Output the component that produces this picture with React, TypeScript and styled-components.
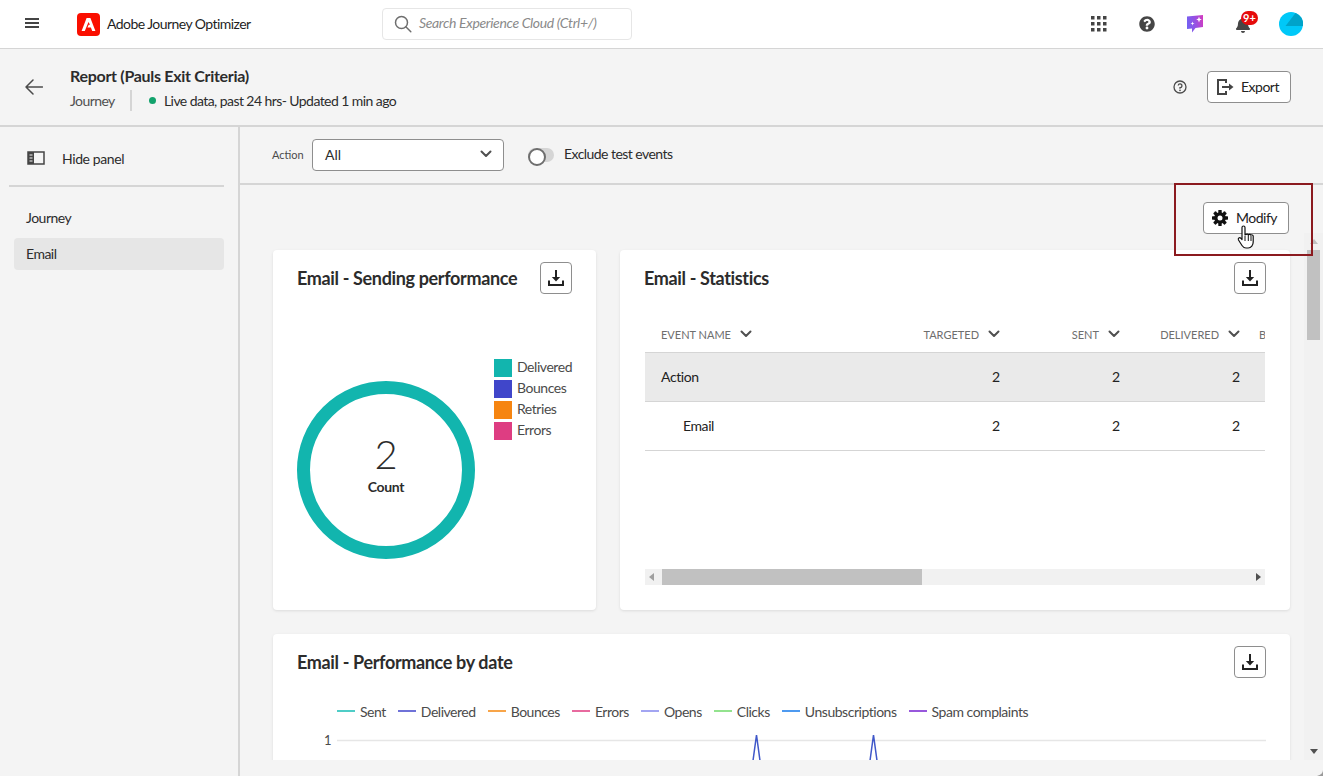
import React from "react";
import styled, { createGlobalStyle } from "styled-components";
import { FaBell, FaQuestionCircle } from "react-icons/fa";

const FONT = `Lato, "Open Sans", "Liberation Sans", sans-serif`;

const Global = createGlobalStyle`
  html, body { margin: 0; padding: 0; height: 100%; overflow: hidden; background: #f4f4f4; }
  body { font-family: ${FONT}; color: #2c2c2c; }
  * { box-sizing: border-box; }
`;

const Page = styled.div`
  position: relative; width: 1323px; height: 776px; display: flex; flex-direction: column; overflow: hidden;
  background: #f4f4f4; font-size: 14px;
`;

/* ---------- top bar ---------- */
const TopBar = styled.header`
  height: 49px; flex: none; background: #fff; border-bottom: 1px solid #d5d5d5; display: flex; align-items: center;
  padding-left: 25px;
`;
const Burger = styled.svg`width: 14px; height: 10px; flex: none; margin-right: 38px; margin-top: -2px;`;
const Logo = styled.svg`width: 23px; height: 23px; flex: none; margin-right: 7px;`;
const Brand = styled.span`width: 275px; flex: none; font-size: 14px; color: #1f1f1f; letter-spacing: -0.55px; padding-bottom: 1px;`;
const Search = styled.div`
  width: 250px; height: 32px; flex: none; border: 1px solid #e6e6e6; border-radius: 4px; display: flex; align-items: center;
  padding-left: 11px; gap: 7px; font-style: italic; font-size: 14px; color: #8a8a8a; letter-spacing: -0.35px;
`;
const SearchText = styled.span`padding-bottom: 3px;`;
const TopIcons = styled.div`
  margin-left: auto; display: flex; align-items: center; gap: 31px; padding-right: 20px; height: 48px; flex: none;
`;
const BellWrap = styled.div`position: relative; width: 16px; height: 18px; display: flex; color: #464646; margin-top: 3px;`;
const Badge = styled.span`
  position: absolute; left: 6px; top: -6px; height: 14px; min-width: 17px; padding: 0 2px; border-radius: 7px; background: #e50b0b; color: #fff;
  font: 700 11px/14px ${FONT}; text-align: center;
`;
const HelpDark = styled.span`display: flex; color: #464646; font-size: 16px; margin-left: 1px;`;
const Avatar = styled.svg`width: 24px; height: 24px; flex: none; margin-left: -3px;`;

/* ---------- page header ---------- */
const Header = styled.section`
  height: 78px; flex: none; border-bottom: 2px solid #d5d5d5; display: flex; align-items: center; padding: 0 32px 0 25px;
`;
const BackIcon = styled.svg`width: 18px; height: 16px; flex: none; margin-right: 27px;`;
const HeaderText = styled.div`display: flex; flex-direction: column; gap: 4px; margin-top: 2px;`;
const Title = styled.h1`margin: 0; font-size: 16px; line-height: 20px; font-weight: 700; color: #2c2c2c; letter-spacing: -0.3px;`;
const Meta = styled.div`display: flex; align-items: center; font-size: 14px; line-height: 21px; height: 21px; letter-spacing: -0.57px;`;
const MetaType = styled.span`color: #505050; width: 62px; height: 21px; border-right: 2px solid #d5d5d5;`;
const Dot = styled.span`width: 7px; height: 7px; border-radius: 50%; background: #12a26c; margin: 0 8px 0 17px;`;
const HeaderActions = styled.div`margin-left: auto; display: flex; align-items: center; gap: 20px;`;
const OutlineButton = styled.button`
  height: 32px; display: inline-flex; align-items: center; background: #fff; border: 1px solid #8e8e8e; border-radius: 4px;
  font: 400 14px ${FONT}; color: #222; letter-spacing: -0.5px; padding: 0; cursor: pointer;
`;
const ButtonLabel = styled.span`padding-bottom: 2px;`;
const ExportButton = styled(OutlineButton)`width: 84px; padding-left: 8px; gap: 7px;`;
const ModifyButton = styled(OutlineButton)`width: 86px; padding-left: 8px; gap: 8px;`;

/* ---------- body ---------- */
const Body = styled.div`flex: 1; min-height: 0; display: flex;`;
const Side = styled.aside`width: 240px; flex: none; border-right: 2px solid #d5d5d5; padding: 0 14px 0 9px;`;
const HidePanel = styled.div`
  height: 60px; display: flex; align-items: center; gap: 17px; padding: 4px 0 0 18px; border-bottom: 2px solid #d5d5d5; font-size: 14px;
  color: #2c2c2c; letter-spacing: -0.4px;
`;
const NavList = styled.nav`display: flex; flex-direction: column; gap: 4px; padding: 15px 0 0 5px;`;
const NavItem = styled.div<{ $active?: boolean }>`
  height: 32px; line-height: 32px; padding-left: 12px; border-radius: 4px; font-size: 14px; letter-spacing: -0.5px;
  background: ${(p) => (p.$active ? "#e6e6e6" : "transparent")};
`;

const Main = styled.main`flex: 1; min-width: 0; display: flex; flex-direction: column;`;
const FilterBar = styled.div`
  height: 58px; flex: none; border-bottom: 2px solid #d5d5d5; display: flex; align-items: center; padding: 0 0 0 32px;
`;
const FilterLabel = styled.span`font-size: 11px; color: #4b4b4b; width: 40px; flex: none; padding-bottom: 2px;`;
const Select = styled.div`
  width: 192px; height: 32px; background: #fff; border: 1px solid #8e8e8e; border-radius: 4px; display: flex; align-items: center;
  justify-content: space-between; padding: 0 11px 2px 12px; font-size: 14px; margin-right: 24px;
`;
const Toggle = styled.span`
  position: relative; width: 26px; height: 14px; border-radius: 7px; background: #d5d5d5; flex: none; margin-right: 10px;
  &::before { content: ""; position: absolute; left: 0; top: 0; width: 14px; height: 14px; border-radius: 50%; background: #fff; border: 2px solid #6e6e6e; }
`;
const ToggleLabel = styled.span`font-size: 14px; letter-spacing: -0.55px; color: #2c2c2c; margin-top: -4px;`;

const ModifyRow = styled.div`height: 48px; flex: none; display: flex; justify-content: flex-end; align-items: flex-start; padding: 17px 34px 0 0;`;
const ScrollZone = styled.div`flex: 1; min-height: 0; display: flex; margin-bottom: 16px;`;
const Scroller = styled.div`flex: 1; min-width: 0; overflow: hidden; padding: 17px 14px 0 33px; display: flex; flex-direction: column; gap: 24px;`;
const Track = styled.div`
  width: 19px; flex: none; background: #f1f1f1; position: relative; display: flex; flex-direction: column; align-items: center;
`;
const Thumb = styled.div`width: 13px; height: 90px; background: #c1c1c1; margin-top: 6px;`;
const ArrowUp = styled.span`
  margin-top: 6px; width: 0; height: 0; border-left: 4px solid transparent; border-right: 4px solid transparent; border-bottom: 5px solid #c0c0c0;
`;
const ArrowDown = styled.span`
  position: absolute; bottom: 6px; width: 0; height: 0; border-left: 4px solid transparent; border-right: 4px solid transparent; border-top: 5px solid #505050;
`;

const Row = styled.div`display: flex; gap: 24px; flex: none;`;
const Card = styled.section<{ $w?: number; $h?: number }>`
  ${(p) => (p.$w ? `width: ${p.$w}px;` : "width: 100%;")}
  ${(p) => (p.$h ? `height: ${p.$h}px;` : "")}
  flex: none; background: #fff; border-radius: 4px; box-shadow: 0 1px 3px rgba(0,0,0,0.1); padding: 12px 24px 0;
  display: flex; flex-direction: column;
`;
const CardHead = styled.div`display: flex; align-items: center; justify-content: space-between; height: 32px; flex: none;`;
const CardTitle = styled.h2`margin: 0; font-size: 18px; font-weight: 700; color: #2c2c2c; letter-spacing: -0.35px;`;
const IconButton = styled(OutlineButton)`width: 32px; justify-content: center;`;

/* donut */
const DonutArea = styled.div`display: flex; padding-top: 65px; height: 300px;`;
const DonutWrap = styled.div`position: relative; width: 178px; height: 178px; margin-top: 22px; flex: none;`;
const DonutCenter = styled.div`
  position: absolute; inset: 0; display: flex; flex-direction: column; align-items: center; padding-top: 49px;
`;
const DonutValue = styled.span`font-size: 40px; line-height: 48px; font-weight: 300; color: #2c2c2c;`;
const DonutLabel = styled.span`font-size: 14px; line-height: 18px; font-weight: 700; color: #2c2c2c; letter-spacing: -0.3px;`;
const Legend = styled.ul`list-style: none; margin: 0 0 0 19px; padding: 0; display: flex; flex-direction: column; gap: 3px;`;
const LegendItem = styled.li`display: flex; align-items: center; gap: 5px; height: 18px; font-size: 14px; color: #4b4b4b; letter-spacing: -0.45px;`;
const LegendName = styled.span`padding-bottom: 4px;`;
const Swatch = styled.span<{ $c: string }>`width: 18px; height: 18px; background: ${(p) => p.$c}; flex: none;`;

/* table */
const TableClip = styled.div`width: 620px; margin: 23px 0 0 1px; overflow: hidden; height: 252px; flex: none;`;
const TableGrid = styled.div`width: 800px;`;
const TableRow = styled.div<{ $head?: boolean; $shade?: boolean }>`
  display: grid; grid-template-columns: 235px 132px 120px 120px 193px; align-items: center;
  height: ${(p) => (p.$head ? 36 : 49)}px;
  border-bottom: 1px solid #d5d5d5;
  background: ${(p) => (p.$shade ? "#eaeaea" : "transparent")};
`;
const HeadCell = styled.div<{ $left?: boolean }>`
  display: flex; align-items: center; gap: 9px; font-size: 11px; color: #6e6e6e;
  justify-content: ${(p) => (p.$left ? "flex-start" : "flex-end")};
  padding: ${(p) => (p.$left ? "0 0 1px 16px" : "0 12px 1px 0")};
`;
const NameCell = styled.div<{ $indent?: boolean }>`
  font-size: 14px; letter-spacing: -0.4px; color: #222; padding: 0 0 2px ${(p) => (p.$indent ? 38 : 16)}px;
`;
const NumCell = styled.div`font-size: 14px; color: #222; text-align: right; padding: 0 12px 2px 0;`;
const LastHead = styled.div`font-size: 11px; color: #6e6e6e; padding: 0 0 1px 7px;`;
const Chevron = styled.svg`width: 12px; height: 8px; flex: none;`;
const HScroll = styled.div`
  width: 620px; margin-left: 1px; height: 16px; background: #f1f1f1; flex: none; display: flex; align-items: center; justify-content: space-between; padding: 0 4px;
  position: relative;
`;
const HThumb = styled.div`position: absolute; left: 17px; top: 0; width: 260px; height: 16px; background: #c1c1c1;`;
const ArrowLeft = styled.span`width: 0; height: 0; border-top: 4px solid transparent; border-bottom: 4px solid transparent; border-right: 5px solid #a0a0a0;`;
const ArrowRight = styled.span`width: 0; height: 0; border-top: 4px solid transparent; border-bottom: 4px solid transparent; border-left: 5px solid #505050;`;

/* line chart */
const LineLegend = styled.div`display: flex; align-items: center; gap: 12px; margin: 23px 0 0 40px; height: 20px; font-size: 14px; color: #4b4b4b; letter-spacing: -0.47px;`;
const LineItem = styled.span`display: flex; align-items: center; gap: 5px;`;
const LineMark = styled.span<{ $c: string }>`width: 18px; height: 2px; background: ${(p) => p.$c}; flex: none;`;
const ChartRow = styled.div`display: flex; margin-top: 9px; height: 60px; position: relative;`;
const AxisLabel = styled.span`width: 40px; padding-left: 27px; font-size: 13px; line-height: 18px; color: #4b4b4b; flex: none; margin-top: 1px;`;
const Chart = styled.svg`width: 929px; height: 60px; flex: none;`;

/* overlays */
const Highlight = styled.div`
  position: absolute; left: 1174px; top: 183px; width: 139px; height: 73px; border: 2px solid #8b1a1f; pointer-events: none;
`;
const Cursor = styled.svg`position: absolute; left: 1237px; top: 225px; width: 20px; height: 24px; pointer-events: none;`;
const Corner = styled.svg`position: absolute; right: 0; bottom: 0; width: 10px; height: 10px;`;

const Down = () => (
  <Chevron viewBox="0 0 12 8"><path d="M1.500 1.500 6 6l4.500-4.500" fill="none" stroke="#505050" strokeWidth="2" strokeLinecap="round" strokeLinejoin="round" /></Chevron>
);
const DownloadIcon = () => (
  <svg width="18" height="18" viewBox="0 0 18 18">
    <path d="M9 1v8M2 11.500V16h14v-4.500" fill="none" stroke="#222" strokeWidth="2" />
    <path d="M4.800 8h8.400L9 12.500z" fill="#222" />
  </svg>
);
const Gear = () => (
  <svg width="16" height="16" viewBox="0 0 16 16">
    <g fill="#111">
      {[0, 45, 90, 135].map((a) => <rect key={a} x="6.300" y="0" width="3.400" height="16" rx="0.600" transform={`rotate(${a} 8 8)`} />)}
    </g>
    <circle cx="8" cy="8" r="5.800" fill="#111" />
    <circle cx="8" cy="8" r="2.500" fill="#fff" />
  </svg>
);

const legend: [string, string][] = [["Delivered", "#12b5ae"], ["Bounces", "#4046ca"], ["Retries", "#f68511"], ["Errors", "#de3d82"]];
const lines: [string, string][] = [
  ["Sent", "#4fcdc7"], ["Delivered", "#6f72d8"], ["Bounces", "#f8a549"], ["Errors", "#e86a9f"],
  ["Opens", "#a3a5f2"], ["Clicks", "#93e38e"], ["Unsubscriptions", "#4e9af0"], ["Spam complaints", "#9858dc"],
];

export default function App() {
  return (
    <Page>
      <Global />
      <TopBar>
        <Burger viewBox="0 0 14 10"><path d="M0 1h14M0 5h14M0 9h14" stroke="#444" strokeWidth="2" /></Burger>
        <Logo viewBox="0 0 23 23">
          <rect width="23" height="23" rx="4" fill="#fa0f00" />
          <path d="M9.600 5h3.800l5 13h-3.200l-1.300-3.500h-3.500l1.300-2.700h1.300L11.500 9 7.800 18H4.600z" fill="#fff" />
        </Logo>
        <Brand>Adobe Journey Optimizer</Brand>
        <Search>
          <svg width="18" height="18" viewBox="0 0 18 18"><circle cx="7.500" cy="7.500" r="6" fill="none" stroke="#6e6e6e" strokeWidth="1.500" /><path d="m11.800 11.800 5 5" stroke="#6e6e6e" strokeWidth="1.500" strokeLinecap="round" /></svg>
          <SearchText>Search Experience Cloud (Ctrl+/)</SearchText>
        </Search>
        <TopIcons>
          <svg width="16" height="16" viewBox="0 0 16 16" fill="#444">
            {[0, 6, 12].flatMap((y) => [0, 6, 12].map((x) => <rect key={`${x}-${y}`} x={x} y={y} width="3.500" height="3.500" />))}
          </svg>
          <HelpDark><FaQuestionCircle /></HelpDark>
          <svg width="18" height="20" viewBox="0 0 18 20">
            <defs><linearGradient id="chat" x1="0" y1="0.400" x2="1" y2="0.200"><stop offset="0" stopColor="#7460f2" /><stop offset="0.550" stopColor="#9a4fe0" /><stop offset="1" stopColor="#d23ac0" /></linearGradient></defs>
            <path d="M1 2.500 17 1v12L9.500 14l-3.500 4.500V14.500L1 15z" fill="url(#chat)" />
            <path d="M13 2.500l.8 2.200 2 .8-2 .8-.8 2.200-.8-2.200-2-.8 2-.8z" fill="#fff" />
            <path d="M6.500 7.500l.5 1.500 1.500.5-1.500.5-.5 1.500-.5-1.500-1.500-.5 1.500-.5z" fill="#fff" />
          </svg>
          <BellWrap><FaBell size={16} /><Badge>9+</Badge></BellWrap>
          <Avatar viewBox="0 0 24 24">
            <circle cx="12" cy="12" r="12" fill="#00c8f8" />
            <path d="M16.500 0.900A12 12 0 0 1 24 14H6.500z" fill="#00a3c9" />
          </Avatar>
        </TopIcons>
      </TopBar>

      <Header>
        <BackIcon viewBox="0 0 18 16"><path d="M17.500 8H1M8 1 1 8l7 7" fill="none" stroke="#4b4b4b" strokeWidth="1.500" strokeLinecap="round" strokeLinejoin="round" /></BackIcon>
        <HeaderText>
          <Title>Report (Pauls Exit Criteria)</Title>
          <Meta>
            <MetaType>Journey</MetaType>
            <Dot />
            <span>Live data, past 24 hrs- Updated 1 min ago</span>
          </Meta>
        </HeaderText>
        <HeaderActions>
          <svg width="14" height="14" viewBox="0 0 14 14">
            <circle cx="7" cy="7" r="6" fill="none" stroke="#4b4b4b" strokeWidth="1.300" />
            <path d="M5.200 5.500A1.900 1.900 0 1 1 7 7.700v1" fill="none" stroke="#4b4b4b" strokeWidth="1.300" />
            <circle cx="7" cy="10.400" r="0.800" fill="#4b4b4b" />
          </svg>
          <ExportButton>
            <svg width="18" height="18" viewBox="0 0 18 18">
              <path d="M10 5V2H2v14h8v-3M6 9h8" fill="none" stroke="#444" strokeWidth="2" />
              <path d="M13 5.500 17.500 9 13 12.500z" fill="#444" />
            </svg>
            <ButtonLabel>Export</ButtonLabel>
          </ExportButton>
        </HeaderActions>
      </Header>

      <Body>
        <Side>
          <HidePanel>
            <svg width="18" height="14" viewBox="0 0 18 14"><path d="M1 1h16v12H1z" fill="none" stroke="#444" strokeWidth="1.500" /><path d="M1 1h6v12H1z" fill="#444" /><path d="M2.500 4h3M2.500 7h3M2.500 10h3" stroke="#f4f4f4" strokeWidth="1" /></svg>
            Hide panel
          </HidePanel>
          <NavList>
            <NavItem>Journey</NavItem>
            <NavItem $active>Email</NavItem>
          </NavList>
        </Side>

        <Main>
          <FilterBar>
            <FilterLabel>Action</FilterLabel>
            <Select>All<Down /></Select>
            <Toggle />
            <ToggleLabel>Exclude test events</ToggleLabel>
          </FilterBar>
          <ModifyRow>
            <ModifyButton><Gear /><ButtonLabel>Modify</ButtonLabel></ModifyButton>
          </ModifyRow>
          <ScrollZone>
            <Scroller>
              <Row>
                <Card $w={323} $h={360}>
                  <CardHead>
                    <CardTitle>Email - Sending performance</CardTitle>
                    <IconButton aria-label="Download"><DownloadIcon /></IconButton>
                  </CardHead>
                  <DonutArea>
                    <DonutWrap>
                      <svg width="178" height="178" viewBox="0 0 178 178"><circle cx="89" cy="89" r="82.500" fill="none" stroke="#12b5ae" strokeWidth="13" /></svg>
                      <DonutCenter>
                        <DonutValue>2</DonutValue>
                        <DonutLabel>Count</DonutLabel>
                      </DonutCenter>
                    </DonutWrap>
                    <Legend>
                      {legend.map(([n, c]) => (
                        <LegendItem key={n}><Swatch $c={c} /><LegendName>{n}</LegendName></LegendItem>
                      ))}
                    </Legend>
                  </DonutArea>
                </Card>
                <Card $w={670} $h={360}>
                  <CardHead>
                    <CardTitle>Email - Statistics</CardTitle>
                    <IconButton aria-label="Download"><DownloadIcon /></IconButton>
                  </CardHead>
                  <TableClip>
                    <TableGrid>
                      <TableRow $head>
                        <HeadCell $left>EVENT NAME <Down /></HeadCell>
                        <HeadCell>TARGETED <Down /></HeadCell>
                        <HeadCell>SENT <Down /></HeadCell>
                        <HeadCell>DELIVERED <Down /></HeadCell>
                        <LastHead>B</LastHead>
                      </TableRow>
                      <TableRow $shade>
                        <NameCell>Action</NameCell>
                        <NumCell>2</NumCell><NumCell>2</NumCell><NumCell>2</NumCell><NumCell />
                      </TableRow>
                      <TableRow>
                        <NameCell $indent>Email</NameCell>
                        <NumCell>2</NumCell><NumCell>2</NumCell><NumCell>2</NumCell><NumCell />
                      </TableRow>
                    </TableGrid>
                  </TableClip>
                  <HScroll>
                    <ArrowLeft />
                    <HThumb />
                    <ArrowRight />
                  </HScroll>
                </Card>
              </Row>
              <Card>
                <CardHead>
                  <CardTitle>Email - Performance by date</CardTitle>
                  <IconButton aria-label="Download"><DownloadIcon /></IconButton>
                </CardHead>
                <LineLegend>
                  {lines.map(([n, c]) => (
                    <LineItem key={n}><LineMark $c={c} />{n}</LineItem>
                  ))}
                </LineLegend>
                <ChartRow>
                  <AxisLabel>1</AxisLabel>
                  <Chart viewBox="0 0 929 60">
                    <path d="M0 10.500h929" stroke="#e6e6e6" strokeWidth="1.500" />
                    <path d="M412 60 419.500 5 427 60M529 60 536.500 5 544 60" fill="none" stroke="#3f57c9" strokeWidth="1.500" />
                  </Chart>
                </ChartRow>
              </Card>
            </Scroller>
            <Track>
              <ArrowUp />
              <Thumb />
              <ArrowDown />
            </Track>
          </ScrollZone>
        </Main>
      </Body>

      <Highlight />
      <Cursor viewBox="0 0 20 24">
        <path d="M5 2.500c0-2 3-2 3 0V10l1-.6c.7-.4 1.800-.3 2.300.3.800-.6 2-.4 2.500.4.900-.5 2.200 0 2.400 1V17c0 3-2 6-5 6H9c-2 0-3-1-4-2.500L1.500 15c-.8-1.500 1-3 2.300-1.800L5 14.500z" fill="#fff" stroke="#111" strokeWidth="1.200" strokeLinejoin="round" />
        <path d="M8 11v5M11.300 10v6M14 11v5" stroke="#111" strokeWidth="1" />
      </Cursor>
      <Corner viewBox="0 0 10 10"><path d="M10 4C10 7 8 9 4 10h6z" fill="#9a9a9a" /></Corner>
    </Page>
  );
}
